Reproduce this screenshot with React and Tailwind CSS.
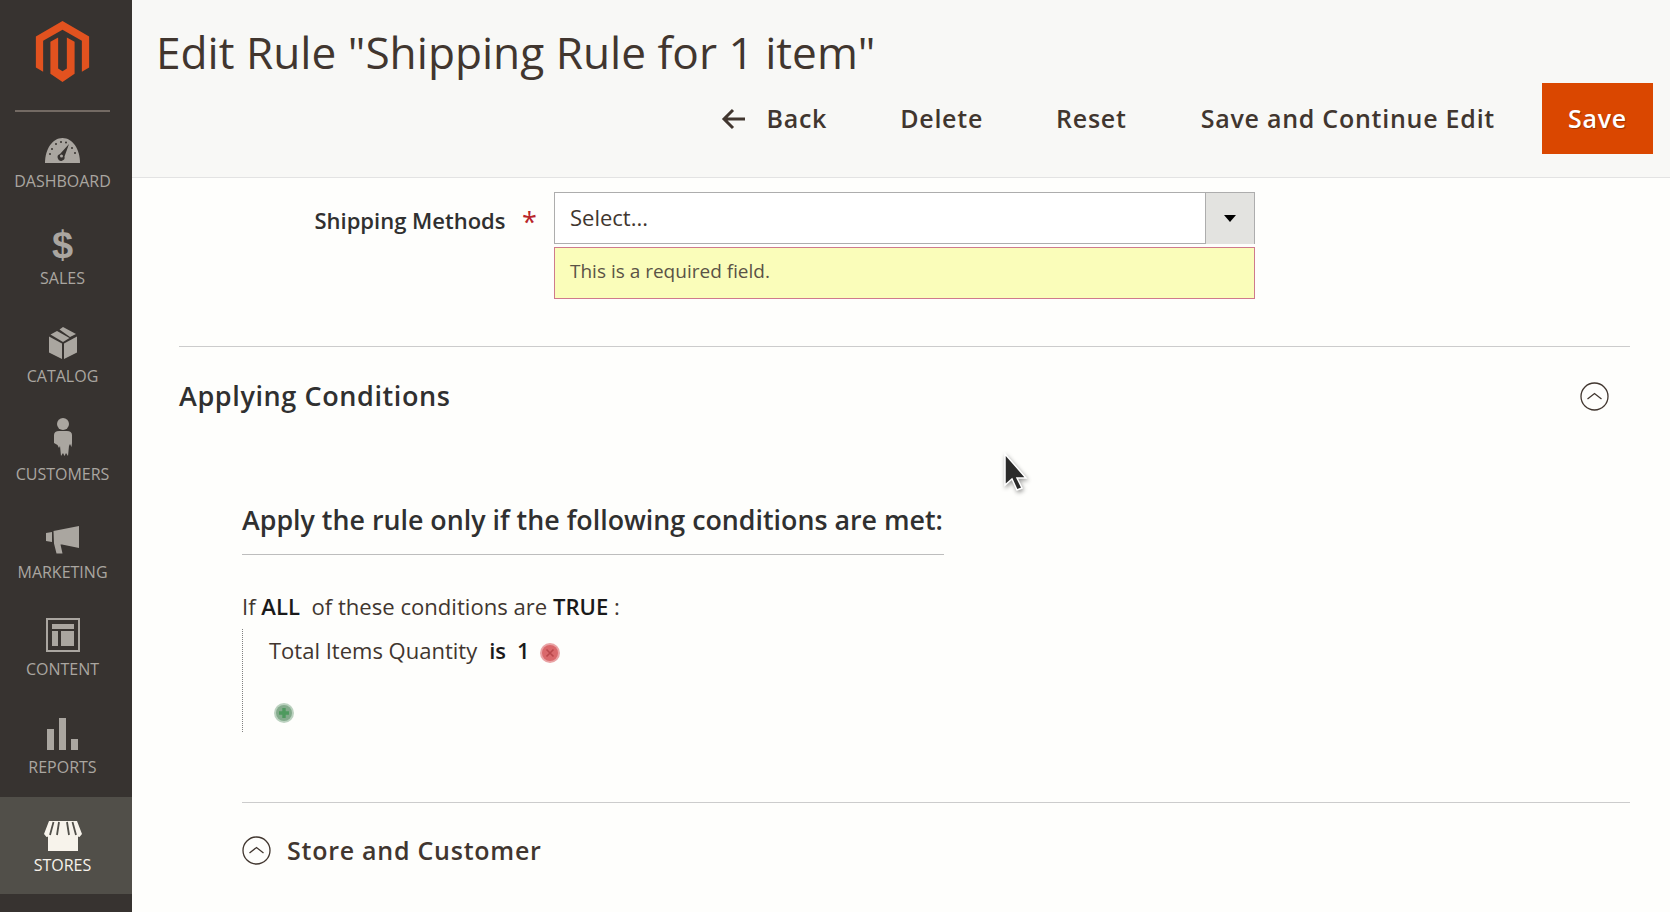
const NAV = [
  { label: "DASHBOARD", icon: <GaugeIcon /> },
  { label: "SALES", icon: <span className="font-['Liberation_Sans'] text-[38px] leading-[31px] font-bold">$</span> },
  { label: "CATALOG", icon: <BoxIcon /> },
  { label: "CUSTOMERS", icon: <PersonIcon /> },
  { label: "MARKETING", icon: <MegaphoneIcon /> },
  { label: "CONTENT", icon: <ContentIcon /> },
  { label: "REPORTS", icon: <BarsIcon /> },
  { label: "STORES", icon: <StoreIcon />, active: true },
];

function Logo() {
  return (
    <svg width="55" height="63" viewBox="0 0 55 63" fill="#e2521f">
      <path d="M27.5 0 55 16v32l-7.5 4.3V20.5L27.5 9 7.5 20.5v31.8L0 48V16z" />
      <path d="M15 21.5 23 17v32l4.5 3 4.5-3V17l8 4.5v33L27.5 63 15 54.500z" />
    </svg>
  );
}

function GaugeIcon() {
  return (
    <svg width="35" height="25" viewBox="0 0 35 25" fill="currentColor">
      <path d="M0 25C0 11 7.500 0 17.500 0S35 11 35 25z" />
      <g fill="#373330">
        <circle cx="5" cy="16" r="1" />
        <circle cx="7" cy="11" r="1" />
        <circle cx="11" cy="6" r="1" />
        <circle cx="16" cy="4" r="1" />
        <circle cx="21" cy="4.500" r="1" />
        <circle cx="27" cy="10" r="1" />
        <circle cx="30" cy="15" r="1" />
        <path d="M24 6 19.500 18.500a3.500 3.500 0 1 1-4.500-2.500z" />
      </g>
      <circle cx="16.500" cy="18" r="1.500" />
    </svg>
  );
}

function BoxIcon() {
  return (
    <svg width="28" height="32" viewBox="0 0 28 32" fill="currentColor">
      <path d="M0 9.500 13 16.500V32L0 25.500z" />
      <path d="M28 9.500 15 16.500V32l13-6.500z" />
      <path d="M1.500 7.500 8 4l12.500 7-6.500 4z" />
      <path d="M10.500 2.500 14 0l13 7-6 3z" />
    </svg>
  );
}

function PersonIcon() {
  return (
    <svg width="18" height="38" viewBox="0 0 18 38" fill="currentColor">
      <circle cx="9" cy="6" r="6" />
      <path d="M5 13h8c3 0 5 1.500 5 4v8l-.5 4-1.500-3-1 2-1 10-2-3-1.500 3-1.500-3-2 3-1-10-1 2-1.500-3L0 25v-8c0-2.500 2-4 5-4z" />
    </svg>
  );
}

function MegaphoneIcon() {
  return (
    <svg width="33" height="28" viewBox="0 0 33 28" fill="currentColor">
      <path d="M0 7l6-1v10l-6-1z" />
      <path d="M7.500 5 33 0v22l-17-3.500-1.500 0 2 9-6 0-2.500-10z" />
    </svg>
  );
}

function ContentIcon() {
  return (
    <svg width="34" height="34" viewBox="0 0 34 34" fill="currentColor">
      <path d="M0 0h34v34H0zM2 2v30h30V2z" fillRule="evenodd" />
      <path d="M6 6h22v5H6zM6 13h6v15H6zM15 13h13v15H15z" />
    </svg>
  );
}

function BarsIcon() {
  return (
    <svg width="31" height="32" viewBox="0 0 31 32" fill="currentColor">
      <path d="M0 11h7v21H0zM12 0h7v32h-7zM24 21h7v11h-7z" />
    </svg>
  );
}

function StoreIcon() {
  return (
    <svg className="mb-[-3px]" width="38" height="30" viewBox="0 0 38 30" fill="currentColor">
      <path d="M4 10h30v20H4z" />
      <path d="M5 0h28l5 13-2.500 3-3.500-1-3.500 1-3-1-3 1H16l-3-1-3 1-3.500-1L2.500 16 0 13z" />
      <path d="M9.500 1 6 14M15 1l-2 13M23 1l2 13M28.500 1 32 14" stroke="#514f49" strokeWidth="1.800" fill="none" />
    </svg>
  );
}

function ChevronCircle() {
  return (
    <svg width="29" height="29" viewBox="0 0 29 29" fill="none" stroke="#41362f">
      <circle cx="14.500" cy="14.500" r="13.500" strokeWidth="1.300" />
      <path d="M7.500 17 14.500 11.500l7 5.500" strokeWidth="1.300" />
    </svg>
  );
}

function RoundIcon({ kind }) {
  const red = kind === "remove";
  return (
    <svg width="20" height="20" viewBox="0 0 20 20">
      <circle cx="10" cy="10" r="10" fill={red ? "#e9a3a5" : "#bcd2c0"} />
      <circle cx="10" cy="10" r="8" fill={red ? "#d9686b" : "#84ab8c"} />
      {red ? (
        <path d="M6.500 6.500l7 7M13.500 6.500l-7 7" stroke="#b9474b" strokeWidth="1.600" />
      ) : (
        <path d="M10 5v10M5 10h10" stroke="#4e9a5e" strokeWidth="3.400" />
      )}
    </svg>
  );
}

function Cursor() {
  return (
    <svg className="absolute left-[1002px] top-[452px] drop-shadow-[1px_2px_2px_rgba(0,0,0,0.4)]" width="26" height="40" viewBox="0 0 26 40">
      <path d="M3 2v31l7-6 5 11 5-2-5-10h9z" fill="#2a2a2a" stroke="#fff" strokeWidth="1.500" />
    </svg>
  );
}

export default function App() {
  return (
    <div className="relative flex h-[912px] overflow-hidden bg-[#fefefc] font-['Open_Sans',sans-serif] text-[#41362f]">
      <aside className="flex w-[132px] shrink-0 flex-col bg-[#373330]">
        <div className="flex h-[112px] flex-col items-center pr-[7px] pt-[21px]">
          <Logo />
          <div className="mt-[28px] h-[2px] w-[95px] shrink-0 bg-[#736a63]" />
        </div>
        <nav className="flex flex-col">
          {NAV.map((item) => (
            <div
              key={item.label}
              className={
                item.active
                  ? "flex h-[97.800px] flex-col items-center bg-[#514f49] pr-[7px] text-[#f7f3eb]"
                  : "flex h-[97.800px] flex-col items-center pr-[7px] text-[#aaa6a0]"
              }
            >
              <div className="flex h-[51px] items-end justify-center">{item.icon}</div>
              <div className="mt-[6.500px] text-[16px] leading-[22px]">{item.label}</div>
            </div>
          ))}
        </nav>
      </aside>

      <main className="min-w-0 flex-1">
        <header className="h-[178px] border-b border-[#e3e3e3] bg-[#f8f8f6]">
          <h1 className="pl-[24px] pt-[21px] text-[44.200px] leading-[62px] font-normal text-[#41362f]">
            Edit Rule "Shipping Rule for 1 item"
          </h1>
          <div className="flex h-[71px] items-center justify-end pr-[17px] text-[25px] font-semibold tracking-[0.75px]">
            <button className="mr-[73px] flex items-center gap-[21px]">
              <svg width="24" height="22" viewBox="0 0 24 22" fill="none" stroke="currentColor" strokeWidth="3">
                <path d="M12 2 3 11l9 9M3 11h21" />
              </svg>
              Back
            </button>
            <button className="mr-[73px]">Delete</button>
            <button className="mr-[74px]">Reset</button>
            <button className="mr-[47px]">Save and Continue Edit</button>
            <button className="h-[71px] w-[111px] bg-[#da4700] text-white [text-shadow:1px_1px_1px_rgba(0,0,0,0.3)]">Save</button>
          </div>
        </header>

        <section className="pl-[47px] pr-[40px]">
          <div className="flex pt-[14px]">
            <label className="flex w-[375px] shrink-0 justify-end pr-[17px] pt-[13px] text-[22px] leading-[30px] font-semibold text-[#303030]">
              <span className="mr-[16.500px]">Shipping Methods</span>
              <span className="mt-[2px] w-[15px] text-[27px] font-normal text-[#b8252a]">*</span>
            </label>
            <div className="w-[701px]">
              <div className="flex h-[52px] border border-[#adadad] bg-white">
                <div className="flex-1 pl-[15px] text-[22px] leading-[48px]">Select...</div>
                <div className="mt-[-1px] flex h-[52px] w-[49px] items-center justify-center border-l border-t border-[#adadad] bg-[#e3e3e0]">
                  <div className="h-0 w-0 border-x-[6px] border-t-[7px] border-x-transparent border-t-black" />
                </div>
              </div>
              <div className="mt-[3px] h-[52px] border border-[#cf7a8c] bg-[#fafdba] pl-[15px] text-[19px] leading-[47px] text-[#5a5346]">
                This is a required field.
              </div>
            </div>
          </div>

          <div className="mt-[47px] flex h-[100px] items-start justify-between border-t border-[#cccccc] pr-[21px] pt-[31px]">
            <h2 className="text-[27px] leading-[36px] font-semibold tracking-[0.6px] text-[#303030]">Applying Conditions</h2>
            <div className="mt-[4px]"><ChevronCircle /></div>
          </div>

          <div className="pl-[63px]">
            <h3 className="w-[702px] whitespace-nowrap border-b border-[#bdbdbd] pt-[56px] pb-[16px] text-[26.800px] leading-[36px] font-semibold text-[#303030]">
              Apply the rule only if the following conditions are met:
            </h3>
            <p className="mt-[36px] text-[22.100px] leading-[30px]">
              If <b className="font-semibold text-[#1a1a1a]">ALL</b>&nbsp; of these conditions are <b className="font-semibold text-[#1a1a1a]">TRUE</b> :
            </p>
            <div className="mt-[8px] h-[103px] border-l border-dotted border-[#808080] pl-[26px]">
              <div className="flex items-center pt-[6px] text-[22px] leading-[30px]">
                Total Items Quantity
                <b className="ml-[12px] font-semibold text-[#1a1a1a]">is</b>
                <b className="ml-[11px] font-semibold text-[#1a1a1a]">1</b>
                <span className="ml-[10px] mt-[5px]"><RoundIcon kind="remove" /></span>
              </div>
              <div className="ml-[5px] mt-[38px]"><RoundIcon kind="add" /></div>
            </div>
            <div className="mt-[70px] flex items-center border-t border-[#cccccc] pt-[29px]">
              <ChevronCircle />
              <h2 className="ml-[16px] text-[25px] leading-[36px] font-semibold tracking-[0.75px] text-[#41362f]">Store and Customer</h2>
            </div>
          </div>
        </section>
      </main>

      <Cursor />
    </div>
  );
}
